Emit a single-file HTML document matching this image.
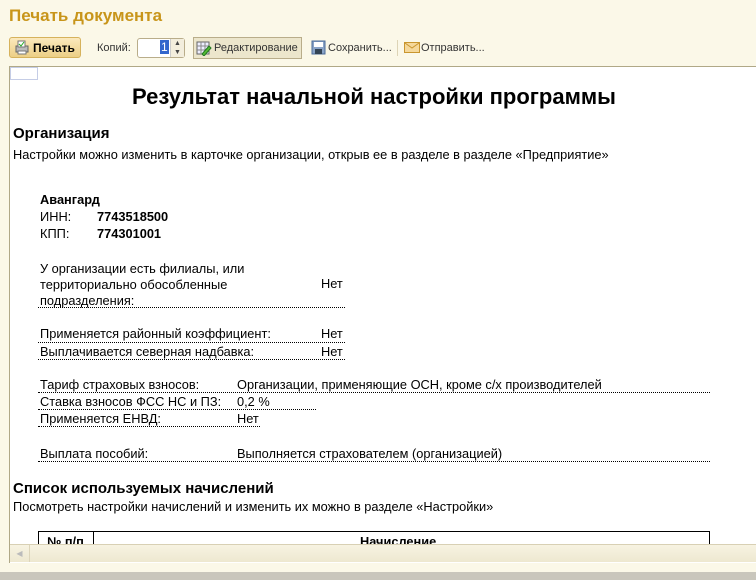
<!DOCTYPE html>
<html><head><meta charset="utf-8"><style>
*{margin:0;padding:0;box-sizing:border-box}
body{width:756px;height:580px;background:#fbf8e8;font-family:"Liberation Sans",Arial,sans-serif;position:relative;overflow:hidden;color:#000}
.a{position:absolute;white-space:nowrap}
.t{font-size:12.8px}
.tb{font-size:11px;color:#333}
.b{font-weight:bold}
.d{position:absolute;height:0;border-top:1px dotted #000}
</style></head><body>
<div class="a b" style="left:9px;top:6px;font-size:17px;color:#c8951a">Печать документа</div>
<div class="a" style="left:9px;top:37px;width:72px;height:21px;border:1px solid #d6b25c;border-radius:3px;background:linear-gradient(#fbe9bd,#eccf86)"></div>
<svg class="a" style="left:14px;top:40px" width="16" height="15"><rect x="2" y="6" width="12" height="6" fill="#bbb" stroke="#666"/><rect x="4" y="1" width="7" height="6" fill="#fff" stroke="#777"/><path d="M5 4l2 2 3-4" stroke="#2a2" fill="none"/><rect x="4" y="11" width="8" height="3" fill="#fff" stroke="#777"/></svg>
<div class="a b" style="left:33px;top:41px;font-size:12px">Печать</div>
<div class="a tb" style="left:97px;top:42px">Копий:</div>
<div class="a" style="left:137px;top:38px;width:48px;height:20px;border:1px solid #b9ad8a;border-radius:3px;background:#fff"></div>
<div class="a" style="left:160px;top:40px;background:#3366cc;color:#fff;padding:0 1px;font-size:12px">1</div>
<div class="a" style="left:170px;top:39px;width:14px;height:18px;border-left:1px solid #ccc;background:#f3eedd;font-size:7px;line-height:9px;text-align:center;color:#444">▲<br>▼</div>
<div class="a" style="left:193px;top:37px;width:109px;height:22px;border:1px solid #b9ad8a;background:#ece6cc"></div>
<svg class="a" style="left:196px;top:40px" width="16" height="16"><rect x="1" y="2" width="12" height="12" fill="#eef" stroke="#666"/><path d="M1 6h12M1 10h12M5 2v12M9 2v12" stroke="#888"/><path d="M6 14l7-8 2 2-7 8z" fill="#5b3" stroke="#272"/></svg>
<div class="a tb" style="left:214px;top:42px">Редактирование</div>
<svg class="a" style="left:311px;top:40px" width="15" height="15"><rect x="1" y="1" width="13" height="13" fill="#8aa4c8" stroke="#4a6a98"/><rect x="3" y="2" width="9" height="5" fill="#fff"/><rect x="4" y="9" width="7" height="5" fill="#345"/></svg>
<div class="a tb" style="left:328px;top:42px">Сохранить...</div>
<div class="a" style="left:397px;top:40px;width:1px;height:16px;background:#ddd4b6"></div>
<svg class="a" style="left:404px;top:42px" width="16" height="11"><rect x="0.5" y="0.5" width="15" height="10" fill="#f5d89a" stroke="#c9962e"/><path d="M1 1l7 5 7-5" stroke="#c9962e" fill="none"/></svg>
<div class="a tb" style="left:421px;top:42px">Отправить...</div>
<div class="a" style="left:9px;top:66px;width:747px;height:497px;background:#fff;border-left:1px solid #b0a887;border-top:1px solid #b0a887"></div>
<div class="a" style="left:10px;top:67px;width:28px;height:13px;border:1px solid #c5cde6;background:#fff"></div>
<div class="a b" style="left:132px;top:84px;font-size:22px">Результат начальной настройки программы</div>
<div class="a b" style="left:13px;top:125px;font-size:15px">Организация</div>
<div class="a t" style="left:13px;top:147px">Настройки можно изменить в карточке организации, открыв ее в разделе в разделе «Предприятие»</div>
<div class="a t b" style="left:40px;top:192px">Авангард</div>
<div class="a t" style="left:40px;top:209px">ИНН:</div><div class="a t b" style="left:97px;top:209px">7743518500</div>
<div class="a t" style="left:40px;top:226px">КПП:</div><div class="a t b" style="left:97px;top:226px">774301001</div>
<div class="a t" style="left:40px;top:261px;line-height:16px">У организации есть филиалы, или<br>территориально обособленные<br>подразделения:</div>
<div class="a t" style="left:321px;top:276px">Нет</div>
<div class="d" style="left:38px;top:307px;width:307px"></div>
<div class="a t" style="left:40px;top:326px">Применяется районный коэффициент:</div><div class="a t" style="left:321px;top:326px">Нет</div>
<div class="d" style="left:38px;top:342px;width:307px"></div>
<div class="a t" style="left:40px;top:344px">Выплачивается северная надбавка:</div><div class="a t" style="left:321px;top:344px">Нет</div>
<div class="d" style="left:38px;top:359px;width:307px"></div>
<div class="a t" style="left:40px;top:377px">Тариф страховых взносов:</div><div class="a t" style="left:237px;top:377px">Организации, применяющие ОСН, кроме с/х производителей</div>
<div class="d" style="left:38px;top:392px;width:672px"></div>
<div class="a t" style="left:40px;top:394px">Ставка взносов ФСС НС и ПЗ:</div><div class="a t" style="left:237px;top:394px">0,2 %</div>
<div class="d" style="left:38px;top:409px;width:278px"></div>
<div class="a t" style="left:40px;top:411px">Применяется ЕНВД:</div><div class="a t" style="left:237px;top:411px">Нет</div>
<div class="d" style="left:38px;top:426px;width:222px"></div>
<div class="a t" style="left:40px;top:446px">Выплата пособий:</div><div class="a t" style="left:237px;top:446px">Выполняется страхователем (организацией)</div>
<div class="d" style="left:38px;top:461px;width:672px"></div>
<div class="a b" style="left:13px;top:480px;font-size:15px">Список используемых начислений</div>
<div class="a t" style="left:13px;top:499px">Посмотреть настройки начислений и изменить их можно в разделе «Настройки»</div>
<div class="a" style="left:38px;top:531px;width:672px;height:20px;border:1px solid #000;border-bottom:none"></div>
<div class="a" style="left:93px;top:531px;width:1px;height:14px;background:#000"></div>
<div class="a t b" style="left:47px;top:534px">№ п/п</div>
<div class="a t b" style="left:360px;top:534px">Начисление</div>
<div class="a" style="left:10px;top:544px;width:746px;height:18px;background:linear-gradient(#f7f3e2,#eee8d0);border-top:1px solid #d8d0b4"></div>
<div class="a" style="left:10px;top:545px;width:20px;height:17px;border-right:1px solid #ddd5ba;color:#bbb;font-size:8px;line-height:17px;text-align:center">◀</div>
<div class="a" style="left:0;top:572px;width:756px;height:8px;background:#c9c6bc"></div>
</body></html>
